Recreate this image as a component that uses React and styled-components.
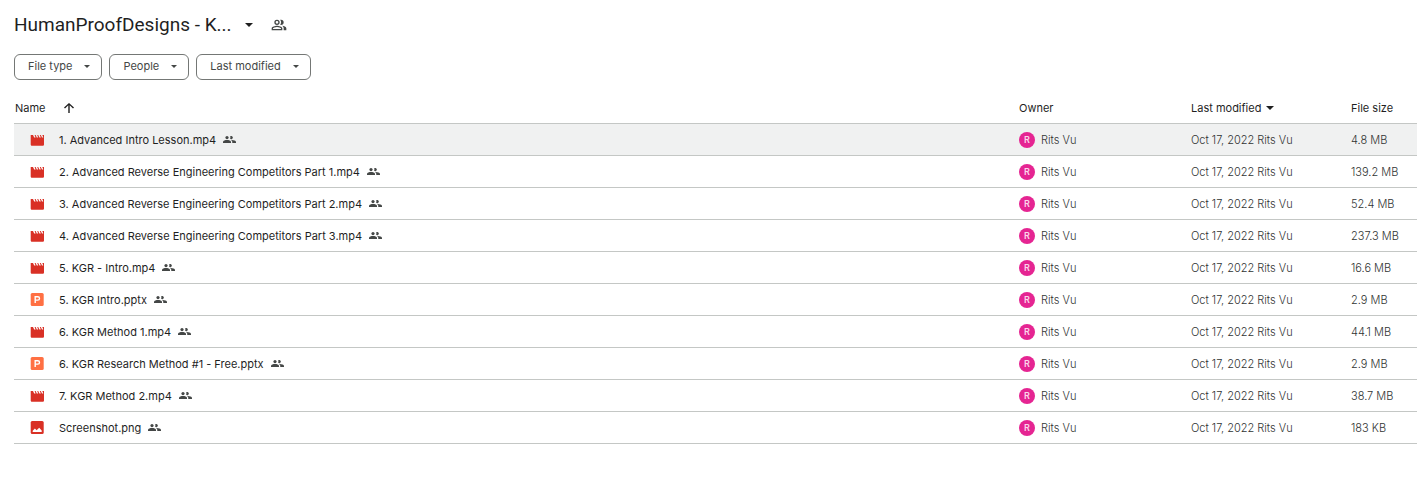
import React from "react";
import styled, { createGlobalStyle } from "styled-components";

const GlobalStyle = createGlobalStyle`
  * { box-sizing: border-box; }
  body {
    margin: 0;
    background: #fff;
    color: #1f1f1f;
    font-family: Inter, Roboto, "Liberation Sans", sans-serif;
  }
  button { font: inherit; color: inherit; background: none; border: 0; padding: 0; cursor: pointer; }
`;

const Page = styled.main`
  padding: 12px 0 40px 14px;
`;

const TitleBar = styled.header`
  display: flex;
  align-items: center;
  height: 26px;
`;

const Heading = styled.h1`
  margin: 0;
  font-family: Roboto, Inter, sans-serif;
  font-size: 19px;
  font-weight: 400;
  line-height: 26px;
`;

const TitleButton = styled.button`
  display: flex;
  align-items: center;
  gap: 13px;
`;

const ShareButton = styled.button`
  display: flex;
  margin-left: 18px;
  color: #444746;
`;

const Filters = styled.div`
  display: flex;
  gap: 7px;
  margin-top: 16px;
`;

const FilterButton = styled.button`
  display: flex;
  align-items: center;
  gap: 12px;
  height: 26px;
  && {
    padding: 0 11px 2px 13px;
    border: 1px solid #747775;
    border-radius: 6px;
    font-size: 11px;
    color: #444746;
  }
`;

const FileTable = styled.table`
  width: 100%;
  margin-top: 12px;
  border-collapse: separate;
  border-spacing: 0;
  table-layout: fixed;
  font-size: 11px;
  line-height: 16px;
`;

const Col = styled.col`
  width: ${(p) => p.$width || "auto"};
`;

const HeadCell = styled.th`
  height: 32px;
  padding: 0 0 0 1px;
  border-bottom: 1px solid #c4c7c5;
  font-weight: 400;
  text-align: left;
  white-space: nowrap;
`;

const SortButton = styled.button`
  display: flex;
  align-items: center;
  gap: ${(p) => p.$gap}px;
`;

const Row = styled.tr`
  background: ${(p) => (p.$active ? "#f0f1f1" : "transparent")};
`;

const Cell = styled.td`
  height: 32px;
  padding: 0 0 0 1px;
  border-bottom: 1px solid #c4c7c5;
  color: #303332;
  font-weight: 300;
  white-space: nowrap;
`;

const FileName = styled.div`
  display: flex;
  align-items: center;
  padding-left: 15px;
  color: #1f1f1f;
  font-weight: 400;
`;

const FileLabel = styled.span`
  margin: 0 7px 0 15px;
`;

const Owner = styled.div`
  display: flex;
  align-items: center;
  gap: 6px;
`;

const Avatar = styled.span`
  display: grid;
  place-items: center;
  width: 16px;
  height: 16px;
  border-radius: 50%;
  background: #e52592;
  color: #fbd5ea;
  font-size: 9px;
  font-weight: 600;
  line-height: 16px;
`;

const Modified = styled.div`
  display: flex;
  gap: 3px;
`;

const Icon = styled.svg`
  display: block;
  flex: none;
  fill: currentColor;
`;

const Caret = ({ width = 8, height = 4 }) => (
  <Icon width={width} height={height} viewBox="0 0 8 4" aria-hidden="true">
    <path d="M0 0h8L4 4z" />
  </Icon>
);

const SharedIcon = () => (
  <Icon width="13" height="7" viewBox="0 0 26 14" role="img" aria-label="Shared" color="#444746">
    <circle cx="8" cy="3.200" r="3.200" />
    <path d="M14.200 .8a3.200 3.200 0 1 1 0 4.800c.8-1.500.8-3.300 0-4.800z" />
    <path d="M0 14v-2c0-2.800 4.500-4 8-4s8 1.200 8 4v2z" />
    <path d="M15.500 8.200c4-.6 10.500.8 10.500 3.800v2h-7.500v-2c0-1.600-1.200-2.900-3-3.800z" />
  </Icon>
);

const SharedOutlineIcon = () => (
  <Icon width="16" height="16" viewBox="0 0 24 24" aria-hidden="true">
    <path d="M9 12a4 4 0 1 0 0-8 4 4 0 0 0 0 8zm0-6a2 2 0 1 1 0 4 2 2 0 0 1 0-4zm0 7c-2.670 0-8 1.340-8 4v3h16v-3c0-2.660-5.330-4-8-4zm6 5H3v-.99C3.200 16.290 6.300 15 9 15s5.800 1.290 6 2v1zM15 12a4 4 0 0 0 0-8c-.47 0-.91.100-1.330.24a5.980 5.980 0 0 1 0 7.520c.42.140.86.240 1.330.240zm1.660 1.130C18.030 14.060 19 15.320 19 17v3h4v-3c0-2.180-3.580-3.470-6.340-3.870z" />
  </Icon>
);

const ArrowUpIcon = () => (
  <Icon width="10" height="10" viewBox="0 0 10 10" aria-hidden="true">
    <path d="M4.300 10V2.200L1 5.400 0 4.500 5 0l5 4.500-1 .9-3.300-3.200V10z" />
  </Icon>
);

const fileIcons = {
  video: (
    <path fill="#d93025" d="M.7 2v9.500c0 .8.600 1.300 1.400 1.300h10.500c.8 0 1.400-.5 1.400-1.300V2h-1.700l1 2.500h-1.300L10.800 2H9.800l1 2.500H9.400L8.200 2H7.200l1 2.500H6.800L5.600 2H4.600l1 2.500H4.200L3 2z" />
  ),
  slides: (
    <>
      <rect x=".7" width="13" height="13" rx="1.500" fill="#ff7043" />
      <path fill="none" stroke="#fff" strokeWidth="1.400" d="M5.200 10V3.700h2.600a1.700 1.700 0 0 1 0 3.400H5.200" />
    </>
  ),
  image: (
    <>
      <rect x=".7" width="13" height="13" rx="1.500" fill="#d93025" />
      <path fill="#fff" d="M2.700 11V9.700l2.200-2.200 1.700 1.700 2.600-2.400 2.500 2.600V11z" />
    </>
  ),
};

const FileIcon = ({ kind }) => (
  <Icon width="14" height="13" viewBox="0 0 14 13" role="img" aria-label={kind}>
    {fileIcons[kind]}
  </Icon>
);

const files = [
  ["video", "1. Advanced Intro Lesson.mp4", "4.8 MB"],
  ["video", "2. Advanced Reverse Engineering Competitors Part 1.mp4", "139.2 MB"],
  ["video", "3. Advanced Reverse Engineering Competitors Part 2.mp4", "52.4 MB"],
  ["video", "4. Advanced Reverse Engineering Competitors Part 3.mp4", "237.3 MB"],
  ["video", "5. KGR - Intro.mp4", "16.6 MB"],
  ["slides", "5. KGR Intro.pptx", "2.9 MB"],
  ["video", "6. KGR Method 1.mp4", "44.1 MB"],
  ["slides", "6. KGR Research Method #1 - Free.pptx", "2.9 MB"],
  ["video", "7. KGR Method 2.mp4", "38.7 MB"],
  ["image", "Screenshot.png", "183 KB"],
];

export default function App() {
  return (
    <Page>
      <GlobalStyle />
      <TitleBar>
        <Heading>
          <TitleButton type="button">
            HumanProofDesigns - K...
            <Caret />
          </TitleButton>
        </Heading>
        <ShareButton type="button" aria-label="Manage access">
          <SharedOutlineIcon />
        </ShareButton>
      </TitleBar>
      <Filters>
        {["File type", "People", "Last modified"].map((label) => (
          <FilterButton key={label} type="button">
            {label}
            <Caret width={6} height={3} />
          </FilterButton>
        ))}
      </Filters>
      <FileTable>
        <colgroup>
          <Col />
          <Col $width="172px" />
          <Col $width="160px" />
          <Col $width="67px" />
        </colgroup>
        <thead>
          <tr>
            <HeadCell>
              <SortButton type="button" $gap={18}>
                Name
                <ArrowUpIcon />
              </SortButton>
            </HeadCell>
            <HeadCell>Owner</HeadCell>
            <HeadCell>
              <SortButton type="button" $gap={5}>
                Last modified
                <Caret />
              </SortButton>
            </HeadCell>
            <HeadCell>File size</HeadCell>
          </tr>
        </thead>
        <tbody>
          {files.map(([kind, name, size], i) => (
            <Row key={name} $active={i === 0}>
              <Cell>
                <FileName>
                  <FileIcon kind={kind} />
                  <FileLabel>{name}</FileLabel>
                  <SharedIcon />
                </FileName>
              </Cell>
              <Cell>
                <Owner>
                  <Avatar aria-hidden="true">R</Avatar>
                  Rits Vu
                </Owner>
              </Cell>
              <Cell>
                <Modified>
                  <span>Oct 17, 2022</span>
                  <span>Rits Vu</span>
                </Modified>
              </Cell>
              <Cell>{size}</Cell>
            </Row>
          ))}
        </tbody>
      </FileTable>
    </Page>
  );
}
